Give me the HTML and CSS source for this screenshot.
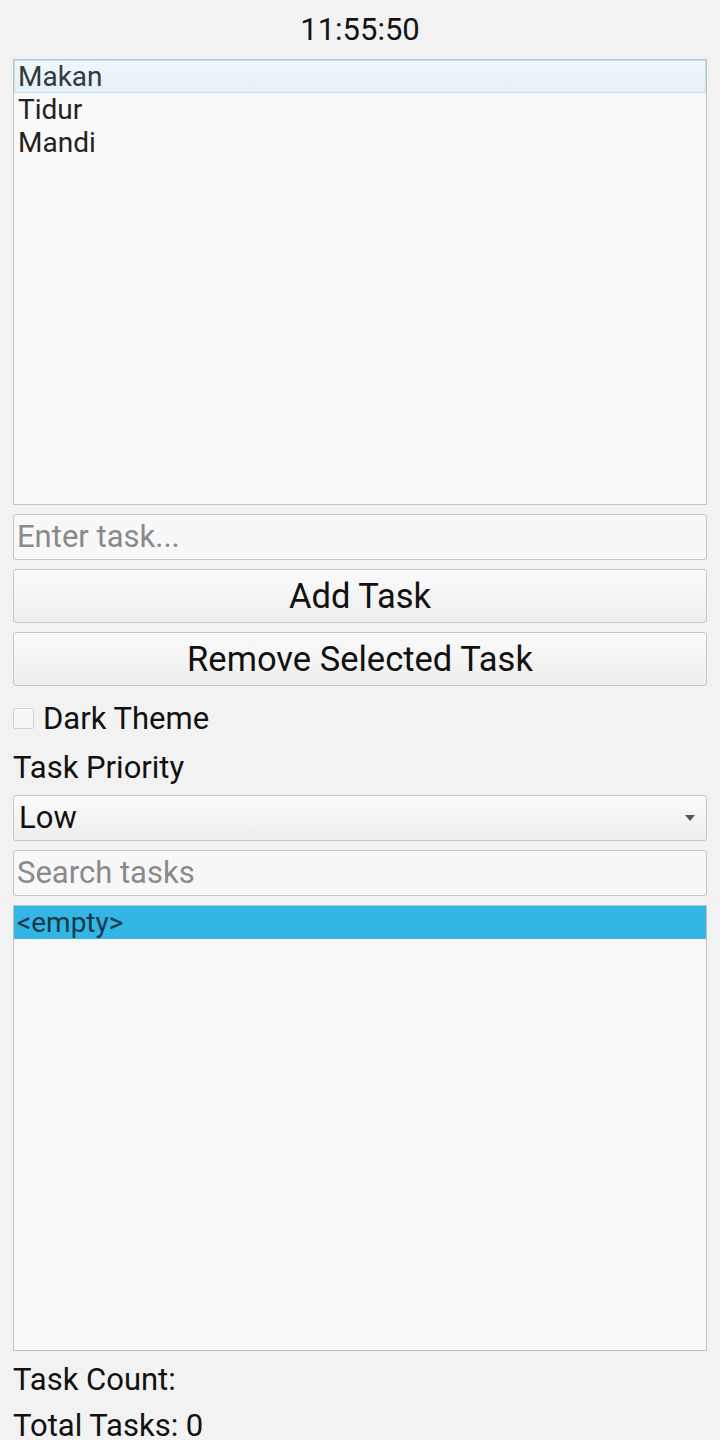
FILE: index.html
```html
<!DOCTYPE html>
<html lang="en">
<head>
<meta charset="utf-8">
<title>Tasks</title>
<link rel="stylesheet" href="styles.css">
</head>
<body>
<div class="app">
  <div class="clock">11:55:50</div>
  <ul class="list list-tasks">
    <li class="row row-focus">Makan</li>
    <li class="row">Tidur</li>
    <li class="row">Mandi</li>
  </ul>
  <div class="field"><span class="placeholder">Enter task...</span></div>
  <div class="button">Add Task</div>
  <div class="button">Remove Selected Task</div>
  <label class="check-row"><span class="checkbox"></span><span>Dark Theme</span></label>
  <div class="label">Task Priority</div>
  <div class="combo"><span>Low</span><span class="arrow"></span></div>
  <div class="field"><span class="placeholder">Search tasks</span></div>
  <ul class="list list-results">
    <li class="row row-selected">&lt;empty&gt;</li>
  </ul>
  <div class="label label-count">Task Count:</div>
  <div class="label label-total">Total Tasks: 0</div>
</div>
</body>
</html>
```
FILE: styles.css
```css
html, body {
  margin: 0;
  padding: 0;
  background: #f2f2f2;
}
body {
  font-family: Roboto, "Noto Sans", sans-serif;
  color: #111;
}
.app {
  display: flex;
  flex-direction: column;
  gap: 9px;
  padding: 0 13px;
  width: 694px;
}
.clock {
  height: 50px;
  line-height: 60px;
  text-align: center;
  font-size: 31px;
  color: #141414;
  margin-bottom: 0;
}
.list {
  list-style: none;
  margin: 0;
  padding: 0;
  background: #f9f9f9;
  border: 1px solid #c2c2c2;
  box-sizing: border-box;
}
.list-tasks {
  height: 446px;
}
.list-results {
  height: 446px;
}
.row {
  height: 33px;
  line-height: 33px;
  font-size: 28px;
  padding-left: 4px;
  box-sizing: border-box;
  color: #232323;
}
.row-focus {
  background: linear-gradient(#eff7fb, #e4f1f7);
  border: 1px solid #c4dfe9;
  padding-left: 3px;
  line-height: 31px;
  color: #333a3c;
}
.row-selected {
  background: #33b5e5;
  color: #17394a;
  padding-left: 3px;
}
.field {
  height: 46px;
  box-sizing: border-box;
  border: 1px solid #c6c6c6;
  border-radius: 3px;
  background: #f8f8f8;
  font-size: 31px;
  line-height: 44px;
  padding-left: 3px;
}
.placeholder {
  color: #8a8a8a;
}
.button {
  height: 54px;
  box-sizing: border-box;
  border: 1px solid #c6c6c6;
  border-radius: 3px;
  background: linear-gradient(#fbfbfb, #ededed);
  font-size: 34.5px;
  line-height: 52px;
  text-align: center;
  color: #111;
}
.check-row {
  height: 45px;
  display: flex;
  align-items: center;
  gap: 9px;
  font-size: 31px;
  color: #111;
  padding-top: 1px;
  box-sizing: border-box;
}
.checkbox {
  width: 21px;
  height: 21px;
  box-sizing: border-box;
  border: 1px solid #d2d2d2;
  border-radius: 2px;
  background: #f8f8f8;
}
.label {
  font-size: 31px;
  height: 37px;
  line-height: 37px;
  color: #111;
}
.label-count {
  height: 40px;
  line-height: 40px;
}
.label-total {
  height: 32px;
  line-height: 34px;
}
.combo {
  height: 46px;
  box-sizing: border-box;
  border: 1px solid #c6c6c6;
  border-radius: 3px;
  background: linear-gradient(#fbfbfb, #ededed);
  font-size: 31px;
  line-height: 44px;
  padding: 0 11px 0 5px;
  display: flex;
  justify-content: space-between;
  align-items: center;
}
.arrow {
  width: 0;
  height: 0;
  border-left: 5.5px solid transparent;
  border-right: 5.5px solid transparent;
  border-top: 6px solid #555;
}
```
